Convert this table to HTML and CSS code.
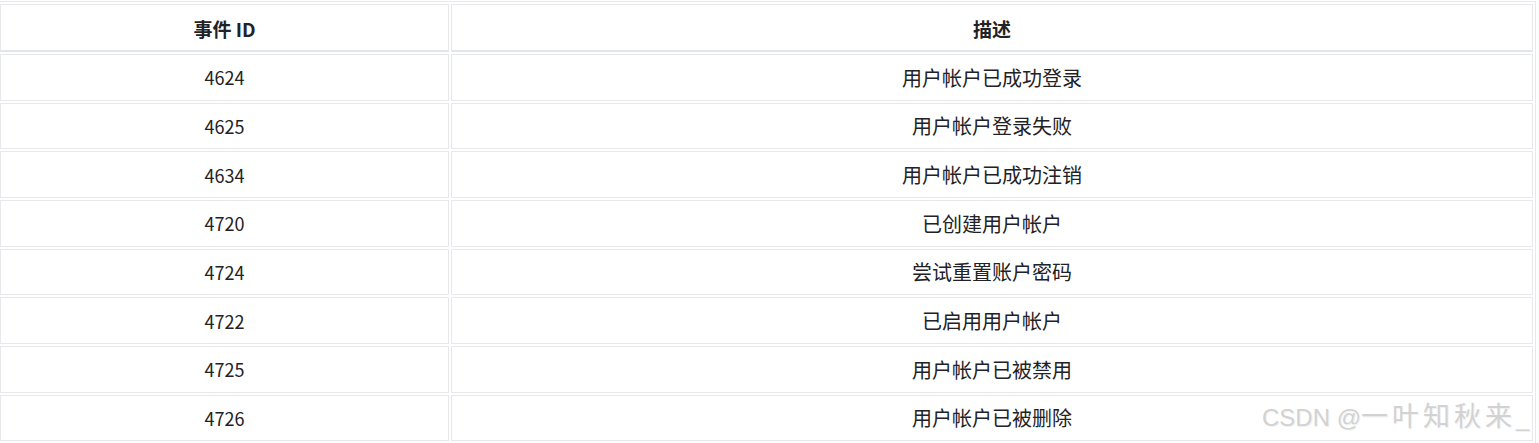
FILE: index.html
```html
<!DOCTYPE html>
<html lang="zh">
<head>
<meta charset="utf-8">
<title>事件 ID</title>
<link rel="stylesheet" href="styles.css">
</head>
<body>
<div class="page">
  <table class="events">
    <thead>
      <tr><th class="col-id">事件 ID</th><th class="col-desc">描述</th></tr>
    </thead>
    <tbody>
      <tr><td class="id">4624</td><td class="desc">用户帐户已成功登录</td></tr>
      <tr><td class="id">4625</td><td class="desc">用户帐户登录失败</td></tr>
      <tr><td class="id">4634</td><td class="desc">用户帐户已成功注销</td></tr>
      <tr><td class="id">4720</td><td class="desc">已创建用户帐户</td></tr>
      <tr><td class="id">4724</td><td class="desc">尝试重置账户密码</td></tr>
      <tr><td class="id">4722</td><td class="desc">已启用用户帐户</td></tr>
      <tr><td class="id">4725</td><td class="desc">用户帐户已被禁用</td></tr>
      <tr><td class="id">4726</td><td class="desc">用户帐户已被删除</td></tr>
    </tbody>
  </table>
  <div class="watermark">CSDN @<span class="wm-cjk">一叶知秋来</span>_</div>
</div>
</body>
</html>
```
FILE: styles.css
```css
html, body {
  margin: 0;
  padding: 0;
  background: #ffffff;
  overflow: hidden;
}
.page {
  position: relative;
  width: 1539px;
  height: 443px;
  padding-top: 1px;
  box-sizing: border-box;
  font-family: "Noto Sans CJK SC", "Noto Sans", sans-serif;
  color: #222226;
}
.events {
  width: 1539px;
  margin-left: -3px;
  border: 1px solid #e6e8eb;
  border-spacing: 2px;
  table-layout: fixed;
}
.events th,
.events td {
  border: 1px solid #e6e8eb;
  text-align: center;
  padding: 0;
  box-sizing: border-box;
  height: 46.67px;
  font-weight: 400;
}
.events th {
  font-weight: 700;
  font-size: 19px;
  height: 48px;
  padding-top: 1px;
  border-bottom: 2px solid #e2e5e9;
}
.events td.id {
  font-size: 18px;
}
.events td.desc {
  font-size: 20px;
}
.col-id { width: 449px; }
.watermark {
  position: absolute;
  left: 1262px;
  top: 401px;
  font-family: "Liberation Sans", Arial, sans-serif;
  font-size: 24px;
  color: #d2d2d2;
  text-shadow: 1px 1px 0 #f2f2f2;
  white-space: nowrap;
  line-height: 28px;
}
.wm-cjk {
  font-family: "Noto Sans CJK SC", sans-serif;
  font-size: 27px;
  letter-spacing: 4px;
}
```
